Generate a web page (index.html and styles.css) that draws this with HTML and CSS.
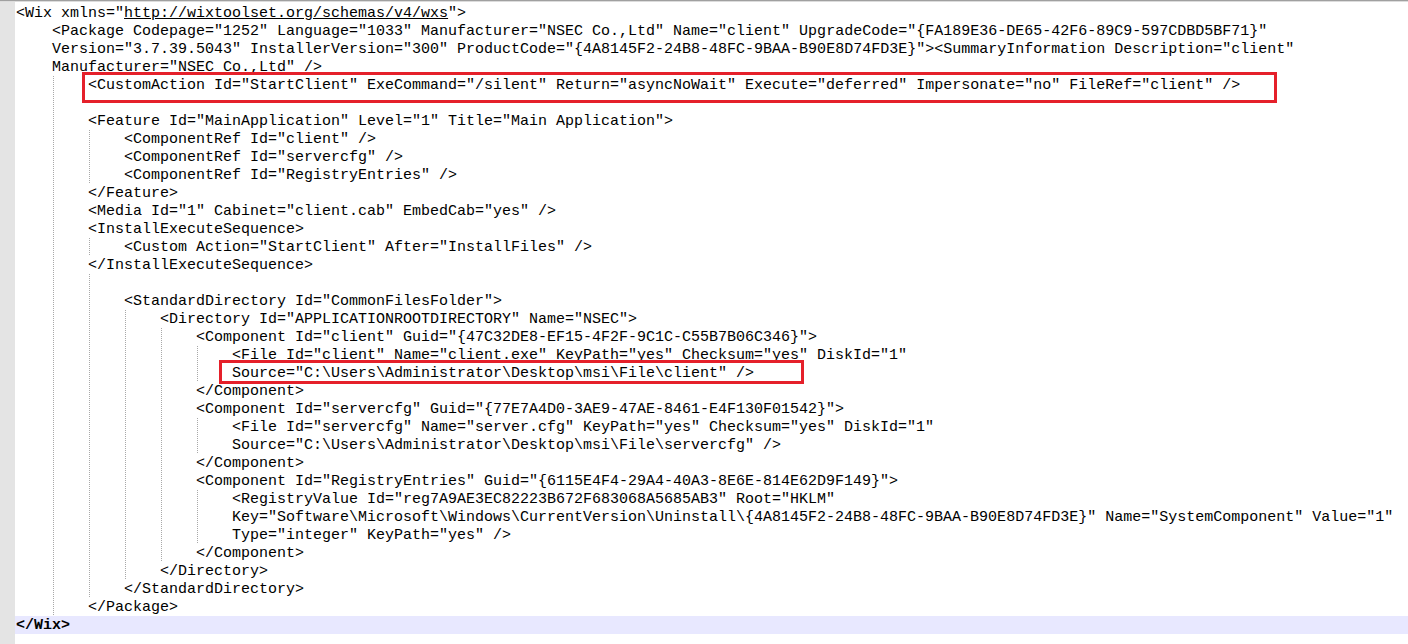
FILE: index.html
```html
<!DOCTYPE html>
<html lang="en">

<head>
  <meta charset="UTF-8" />
  <title>wix.xml</title>
  <link rel="stylesheet" href="styles.css">
</head>

<body>
  <div class="window">
    <div class="gutter"></div>
    <div class="editor">
      <div class="ln">&lt;Wix xmlns="<u>http://wixtoolset.org/schemas/v4/wxs</u>"&gt;</div>
      <div class="ln"><i></i>&lt;Package Codepage="1252" Language="1033" Manufacturer="NSEC Co.,Ltd" Name="client" UpgradeCode="{FA189E36-DE65-42F6-89C9-597CDBD5BF71}"</div>
      <div class="ln"><i></i>Version="3.7.39.5043" InstallerVersion="300" ProductCode="{4A8145F2-24B8-48FC-9BAA-B90E8D74FD3E}"&gt;&lt;SummaryInformation Description="client"</div>
      <div class="ln"><i></i>Manufacturer="NSEC Co.,Ltd" /&gt;</div>
      <div class="ln"><i></i><i></i>&lt;CustomAction Id="StartClient" ExeCommand="/silent" Return="asyncNoWait" Execute="deferred" Impersonate="no" FileRef="client" /&gt;</div>
      <div class="ln"><i></i><i></i></div>
      <div class="ln"><i></i><i></i>&lt;Feature Id="MainApplication" Level="1" Title="Main Application"&gt;</div>
      <div class="ln"><i></i><i></i><i></i>&lt;ComponentRef Id="client" /&gt;</div>
      <div class="ln"><i></i><i></i><i></i>&lt;ComponentRef Id="servercfg" /&gt;</div>
      <div class="ln"><i></i><i></i><i></i>&lt;ComponentRef Id="RegistryEntries" /&gt;</div>
      <div class="ln"><i></i><i></i>&lt;/Feature&gt;</div>
      <div class="ln"><i></i><i></i>&lt;Media Id="1" Cabinet="client.cab" EmbedCab="yes" /&gt;</div>
      <div class="ln"><i></i><i></i>&lt;InstallExecuteSequence&gt;</div>
      <div class="ln"><i></i><i></i><i></i>&lt;Custom Action="StartClient" After="InstallFiles" /&gt;</div>
      <div class="ln"><i></i><i></i>&lt;/InstallExecuteSequence&gt;</div>
      <div class="ln"><i></i><i></i><i></i></div>
      <div class="ln"><i></i><i></i><i></i>&lt;StandardDirectory Id="CommonFilesFolder"&gt;</div>
      <div class="ln"><i></i><i></i><i></i><i></i>&lt;Directory Id="APPLICATIONROOTDIRECTORY" Name="NSEC"&gt;</div>
      <div class="ln"><i></i><i></i><i></i><i></i><i></i>&lt;Component Id="client" Guid="{47C32DE8-EF15-4F2F-9C1C-C55B7B06C346}"&gt;</div>
      <div class="ln"><i></i><i></i><i></i><i></i><i></i><i></i>&lt;File Id="client" Name="client.exe" KeyPath="yes" Checksum="yes" DiskId="1"</div>
      <div class="ln"><i></i><i></i><i></i><i></i><i></i><i></i>Source="C:\Users\Administrator\Desktop\msi\File\client" /&gt;</div>
      <div class="ln"><i></i><i></i><i></i><i></i><i></i>&lt;/Component&gt;</div>
      <div class="ln"><i></i><i></i><i></i><i></i><i></i>&lt;Component Id="servercfg" Guid="{77E7A4D0-3AE9-47AE-8461-E4F130F01542}"&gt;</div>
      <div class="ln"><i></i><i></i><i></i><i></i><i></i><i></i>&lt;File Id="servercfg" Name="server.cfg" KeyPath="yes" Checksum="yes" DiskId="1"</div>
      <div class="ln"><i></i><i></i><i></i><i></i><i></i><i></i>Source="C:\Users\Administrator\Desktop\msi\File\servercfg" /&gt;</div>
      <div class="ln"><i></i><i></i><i></i><i></i><i></i>&lt;/Component&gt;</div>
      <div class="ln"><i></i><i></i><i></i><i></i><i></i>&lt;Component Id="RegistryEntries" Guid="{6115E4F4-29A4-40A3-8E6E-814E62D9F149}"&gt;</div>
      <div class="ln"><i></i><i></i><i></i><i></i><i></i><i></i>&lt;RegistryValue Id="reg7A9AE3EC82223B672F683068A5685AB3" Root="HKLM"</div>
      <div class="ln"><i></i><i></i><i></i><i></i><i></i><i></i>Key="Software\Microsoft\Windows\CurrentVersion\Uninstall\{4A8145F2-24B8-48FC-9BAA-B90E8D74FD3E}" Name="SystemComponent" Value="1"</div>
      <div class="ln"><i></i><i></i><i></i><i></i><i></i><i></i>Type="integer" KeyPath="yes" /&gt;</div>
      <div class="ln"><i></i><i></i><i></i><i></i><i></i>&lt;/Component&gt;</div>
      <div class="ln"><i></i><i></i><i></i><i></i>&lt;/Directory&gt;</div>
      <div class="ln"><i></i><i></i><i></i>&lt;/StandardDirectory&gt;</div>
      <div class="ln"><i></i><i></i>&lt;/Package&gt;</div>
      <div class="ln current"><b>&lt;/Wix&gt;</b></div>
    </div>
  </div>

  <!-- red marks drawn over the editor -->
  <div class="mark mark-action"></div>
  <div class="mark mark-source"></div>
</body>

</html>
```

FILE: styles.css
```css
body {
  margin: 0;
  padding: 0;
  background: #fff;
  position: relative;
  height: 644px;
  overflow: hidden;
}

.window {
  display: flex;
  height: 100%;
  border-top: 1px solid #a0a0a0;
  box-shadow: inset 0 1px 0 #dcdcdc;
  box-sizing: border-box;
}

.gutter {
  width: 15px;
  flex-shrink: 0;
  background: #e4e4e4;
  margin-top: 1px;
}

.editor {
  flex: 1;
  padding-top: 3px;
  font-family: "Liberation Mono", "Courier New", monospace;
  font-size: 15px;
  color: #000;
}

.ln {
  height: 18px;
  line-height: 20px;
  padding-left: 1px;
  white-space: pre;
}

.ln i {
  display: inline-block;
  width: 36px;
  height: 18px;
  vertical-align: top;
  background-image: repeating-linear-gradient(to bottom, #a8a8a8 0, #a8a8a8 1px, transparent 1px, transparent 2px);
  background-size: 1px 100%;
  background-position: 1px 0;
  background-repeat: no-repeat;
}

.ln i:first-child {
  background-image: none;
}

.ln u {
  text-decoration: underline;
}

.current {
  background: #e8e8ff;
}

.current b {
  font-weight: bold;
}

.mark {
  position: absolute;
  border: 3px solid #e5202a;
  box-sizing: border-box;
}

.mark-action {
  left: 82px;
  top: 72px;
  width: 1195px;
  height: 31px;
}

.mark-source {
  left: 219px;
  top: 360px;
  width: 585px;
  height: 24px;
}
```
